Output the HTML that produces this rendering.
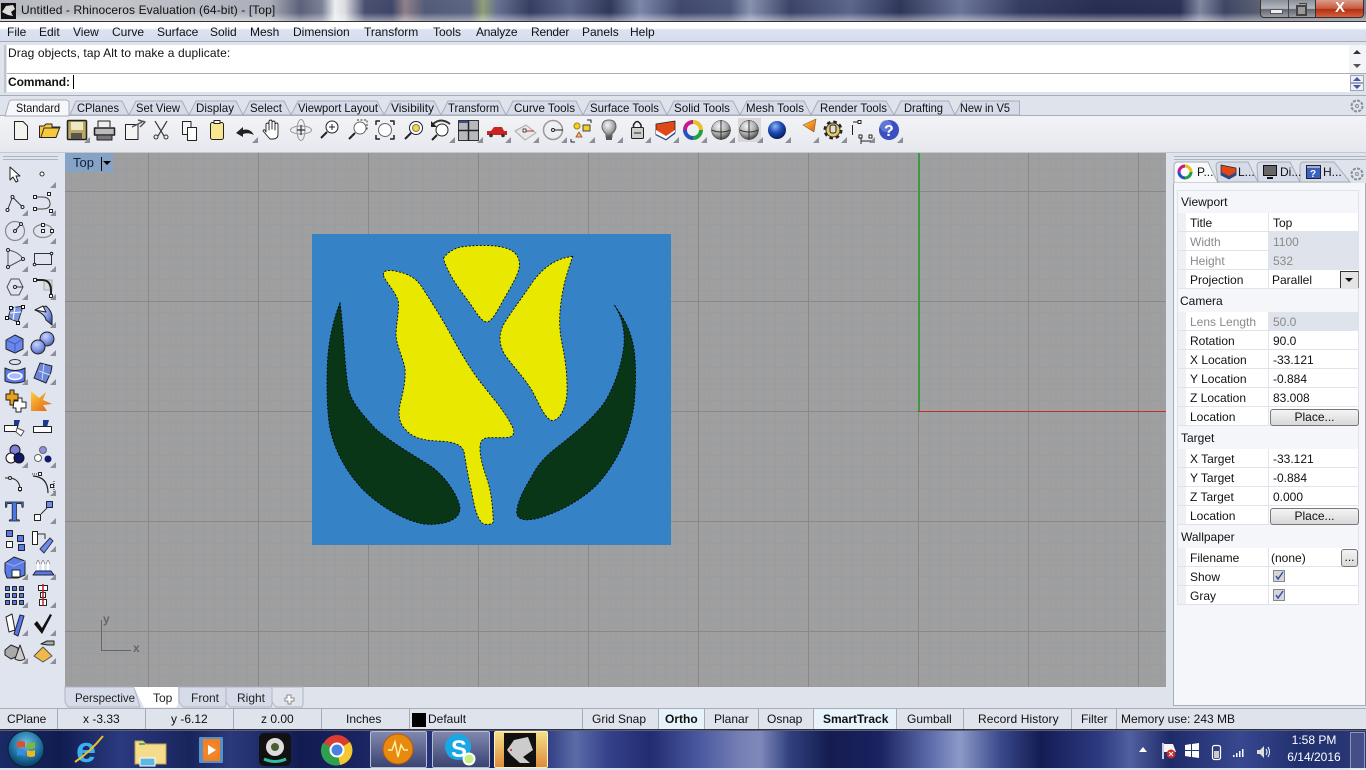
<!DOCTYPE html>
<html><head><meta charset="utf-8"><title>Untitled - Rhinoceros Evaluation (64-bit) - [Top]</title>
<style>
html,body{margin:0;padding:0;width:1366px;height:768px;overflow:hidden;background:#dfe3ec}
.a{position:absolute}
.t{position:absolute;white-space:nowrap;font:12px/14px "Liberation Sans",Arial,sans-serif;color:#111}
.g{color:#8a8a8a}
.b{font-weight:bold}
.c{text-align:center}
svg{position:absolute;left:0;top:0}
.sep{position:absolute;top:709px;height:20px;width:1px;background:#a9adb5}
.row{position:absolute;left:1178px;width:180px;height:18px;background:#fff;border-bottom:1px solid #dfe3ec}
.row:before{content:"";position:absolute;left:0;top:0;width:8px;height:18px;background:#eef0f5}
.row:after{content:"";position:absolute;left:90px;top:0;width:1px;height:18px;background:#dfe3ec}
.dis{position:absolute;left:1269px;width:89px;height:19px;background:#dfe3ec}
.btn{position:absolute;left:1270px;width:87px;height:15px;border:1px solid #777;border-radius:3px;background:linear-gradient(#f4f4f4,#d8d8d8);font:12px/15px "Liberation Sans",sans-serif;text-align:center;color:#111}
</style></head>
<body>
<!-- title bar -->
<div class="a" style="left:0;top:0;width:1366px;height:21px;background:linear-gradient(90deg,#b4b7bf 0,#c2c4c9 120px,#a9adb8 270px,#596079 300px,#7a8096 322px,#eceef0 335px,#d9dbe0 345px,#474e6e 365px,#3f4668 392px,#8f7f88 405px,#525a78 425px,#5b6480 470px,#8f9e78 483px,#667090 497px,#353c60 530px,#5a6488 570px,#2f3658 610px,#7b86a8 640px,#3f486c 680px,#4a5478 730px,#8791ae 750px,#3a4266 790px,#5a658c 850px,#2e3558 900px,#6a7598 960px,#343b60 1020px,#262c50 1100px,#2a3055 1180px,#7e869f 1200px,#3d4464 1225px,#5a5f72 1260px,#7a7e88 1366px)"></div>
<div class="a" style="left:0;top:0;width:1366px;height:21px;background:linear-gradient(rgba(255,255,255,.02),rgba(255,255,255,0) 60%,rgba(255,255,255,.45))"></div>
<div class="a" style="left:0;top:21px;width:1366px;height:1px;background:#333"></div>
<div class="a" style="left:1260px;top:0;width:55px;height:17px;background:linear-gradient(#8a8e98,#b6b9c0 50%,#62666f 55%,#9a9da4);border:1px solid #333;border-top:0;border-radius:0 0 0 4px"></div>
<div class="a" style="left:1315px;top:0;width:47px;height:17px;background:linear-gradient(#d99c8c,#c95a3c 50%,#b03015 55%,#d8603a);border:1px solid #333;border-top:0;border-radius:0 0 4px 0"></div>
<div class="a" style="left:1288px;top:0;width:1px;height:17px;background:#444"></div>
<div class="a" style="left:1270px;top:9px;width:11px;height:3px;background:#eee;border:1px solid #555"></div>
<div class="a" style="left:1296px;top:5px;width:7px;height:7px;border:2px solid #444;background:#999"></div>
<div class="a" style="left:1299px;top:3px;width:7px;height:7px;border:1px solid #444;border-left:0;border-bottom:0"></div>
<div class="t b" style="left:1335px;top:1px;font-size:15px;color:#fff">X</div>

<!-- menu -->
<div class="a" style="left:0;top:22px;width:1366px;height:19px;background:linear-gradient(#fff 0,#fff 6px,#dbe2f2 8px,#d6ddee 100%);border-bottom:1px solid #a8acb6"></div>
<div class="t" style="left:7px;top:25px">File</div>
<div class="t" style="left:39px;top:25px">Edit</div>
<div class="t" style="left:73px;top:25px">View</div>
<div class="t" style="left:112px;top:25px">Curve</div>
<div class="t" style="left:157px;top:25px">Surface</div>
<div class="t" style="left:210px;top:25px">Solid</div>
<div class="t" style="left:250px;top:25px">Mesh</div>
<div class="t" style="left:293px;top:25px">Dimension</div>
<div class="t" style="left:364px;top:25px">Transform</div>
<div class="t" style="left:433px;top:25px">Tools</div>
<div class="t" style="left:476px;top:25px;letter-spacing:-.2px">Analyze</div>
<div class="t" style="left:531px;top:25px;letter-spacing:-.2px">Render</div>
<div class="t" style="left:582px;top:25px">Panels</div>
<div class="t" style="left:630px;top:25px">Help</div>

<!-- command area -->
<div class="a" style="left:4px;top:45px;width:2px;height:48px;background:#c0c4cc"></div>
<div class="a" style="left:7px;top:45px;width:1342px;height:28px;background:#fff"></div>
<div class="a" style="left:1349px;top:45px;width:17px;height:28px;background:#f4f5f8"></div>
<div class="a" style="left:7px;top:73px;width:1359px;height:1px;background:#a8acb6"></div>
<div class="a" style="left:7px;top:74px;width:1343px;height:18px;background:#fff"></div>
<div class="t" style="left:8px;top:46px;letter-spacing:.1px">Drag objects, tap Alt to make a duplicate:</div>
<div class="t b" style="left:8px;top:75px;letter-spacing:-.1px">Command:</div>
<div class="a" style="left:73px;top:75px;width:1px;height:14px;background:#000"></div>
<div class="a" style="left:0;top:95px;width:1366px;height:1px;background:#a8acb6"></div>

<!-- toolbar bg -->
<div class="a" style="left:0;top:115px;width:1366px;height:1px;background:#a9adb8"></div>
<div class="a" style="left:0;top:116px;width:1366px;height:37px;background:linear-gradient(#f2f3f6,#e6e8ee)"></div>
<div class="a" style="left:0;top:152px;width:1366px;height:1px;background:#c4c7ce"></div>

<!-- left + right bg -->
<div class="a" style="left:0;top:153px;width:65px;height:555px;background:#dfe4ee"></div>
<div class="a" style="left:3px;top:156px;width:55px;height:2px;border-top:1px solid #b0b4bc;border-bottom:1px solid #b0b4bc"></div>
<div class="a" style="left:1174px;top:156px;width:192px;height:2px;border-top:1px solid #b0b4bc;border-bottom:1px solid #b0b4bc"></div>

<!-- viewport -->
<div class="a" style="left:65px;top:153px;width:1101px;height:534px;background-color:#9f9f9f;background-image:linear-gradient(90deg,#888 1px,transparent 1px),linear-gradient(#888 1px,transparent 1px),linear-gradient(90deg,#989da4 1px,transparent 1px),linear-gradient(#989da4 1px,transparent 1px);background-size:110px 100%,100% 110px,11px 100%,100% 11px;background-position:83px 0,0 38px,6px 0,0 5px"></div>
<div class="a" style="left:65px;top:153px;width:48px;height:19px;background:#86a3c6"></div>
<div class="t" style="left:73px;top:156px;font-size:13px;color:#102040">Top</div>
<div class="a" style="left:101px;top:157px;width:1px;height:14px;background:#000"></div>
<div class="a" style="left:103px;top:161px;width:0;height:0;border:4px solid transparent;border-top:4px solid #000"></div>
<div class="a" style="left:918px;top:153px;width:2px;height:258px;background:#3c9a40"></div>
<div class="a" style="left:919px;top:411px;width:247px;height:1px;background:#c03030"></div>
<div class="a" style="left:918px;top:411px;width:2px;height:1px;background:#c03030"></div>
<div class="a" style="left:101px;top:620px;width:1px;height:30px;background:#666"></div>
<div class="a" style="left:101px;top:650px;width:30px;height:1px;background:#666"></div>
<div class="t" style="left:103px;top:612px;font-weight:bold;color:#666">y</div>
<div class="t" style="left:133px;top:641px;font-weight:bold;color:#666">x</div>

<!-- bottom tabs -->
<div class="a" style="left:65px;top:687px;width:1101px;height:21px;background:#dfe3ec"></div>
<div class="a" style="left:0;top:708px;width:1366px;height:1px;background:#a9adb5"></div>

<svg width="1366" height="768" viewBox="0 0 1366 768">
<defs>
<radialGradient id="sg" cx=".4" cy=".3" r=".8"><stop offset="0" stop-color="#f4f4f4"/><stop offset=".55" stop-color="#a8a8a8"/><stop offset="1" stop-color="#2a2a2a"/></radialGradient>
<radialGradient id="sb" cx=".4" cy=".3" r=".8"><stop offset="0" stop-color="#8fb4f0"/><stop offset=".45" stop-color="#1c4cb8"/><stop offset="1" stop-color="#04103c"/></radialGradient>
<radialGradient id="sl" cx=".4" cy=".3" r=".8"><stop offset="0" stop-color="#c8d4ff"/><stop offset=".6" stop-color="#7a90e0"/><stop offset="1" stop-color="#3a4890"/></radialGradient>
<linearGradient id="yl" x1="0" y1="0" x2="0" y2="1"><stop offset="0" stop-color="#fff2a0"/><stop offset="1" stop-color="#e0a820"/></linearGradient>
<linearGradient id="or" x1="0" y1="0" x2="1" y2="1"><stop offset="0" stop-color="#ffd040"/><stop offset="1" stop-color="#e05a10"/></linearGradient>
<radialGradient id="orb" cx=".5" cy=".35" r=".7"><stop offset="0" stop-color="#6cc0e8"/><stop offset=".6" stop-color="#1c6e9e"/><stop offset="1" stop-color="#0a2c50"/></radialGradient>
<path id="f" d="M6 0V6H0Z" fill="#8c8f96"/>
</defs>

<!-- tabs top -->
<g font-family="Liberation Sans,sans-serif" font-size="12" fill="#111">
<g fill="#d6dbe9" stroke="#a8adba" stroke-width="1">
<path d="M1019.500 115V101H962L955 115Z"/>
<path d="M955 115L948.500 101H901L894 115Z"/>
<path d="M894 115L886 101H818L811 115Z"/>
<path d="M811 115L804 101H747L740 115Z"/>
<path d="M740 115L733 101H674L667 115Z"/>
<path d="M667 115L660 101H590L583 115Z"/>
<path d="M583 115L576 101H513L506 115Z"/>
<path d="M506 115L499 101H448L441 115Z"/>
<path d="M441 115L434 101H391L384 115Z"/>
<path d="M384 115L377 101H298L291 115Z"/>
<path d="M291 115L284 101H250L243 115Z"/>
<path d="M243 115L236 101H196L189 115Z"/>
<path d="M189 115L182 101H136L129 115Z"/>
<path d="M129 115L122 101H76L70 115Z"/>
</g>
<path d="M5 116L9 102Q10 100 12 100H65Q68 100 69 102V116Z" fill="#f6f7fa" stroke="#a8adba"/>
<g lengthAdjust="spacingAndGlyphs">
<text x="16" y="112" textLength="44" lengthAdjust="spacingAndGlyphs">Standard</text><text x="77" y="112" textLength="42" lengthAdjust="spacingAndGlyphs">CPlanes</text><text x="136" y="112" textLength="44" lengthAdjust="spacingAndGlyphs">Set View</text>
<text x="196" y="112" textLength="38" lengthAdjust="spacingAndGlyphs">Display</text><text x="250" y="112" textLength="32" lengthAdjust="spacingAndGlyphs">Select</text><text x="298" y="112" textLength="80" lengthAdjust="spacingAndGlyphs">Viewport Layout</text>
<text x="391" y="112" textLength="43" lengthAdjust="spacingAndGlyphs">Visibility</text><text x="448" y="112" textLength="51" lengthAdjust="spacingAndGlyphs">Transform</text><text x="514" y="112" textLength="61" lengthAdjust="spacingAndGlyphs">Curve Tools</text>
<text x="590" y="112" textLength="69" lengthAdjust="spacingAndGlyphs">Surface Tools</text><text x="674" y="112" textLength="56" lengthAdjust="spacingAndGlyphs">Solid Tools</text><text x="746" y="112" textLength="58" lengthAdjust="spacingAndGlyphs">Mesh Tools</text>
<text x="820" y="112" textLength="67" lengthAdjust="spacingAndGlyphs">Render Tools</text><text x="904" y="112" textLength="39" lengthAdjust="spacingAndGlyphs">Drafting</text><text x="960" y="112" textLength="50" lengthAdjust="spacingAndGlyphs">New in V5</text>
</g>
</g>
<!-- gear top right -->
<g fill="none" stroke="#8a8d94"><circle cx="1357" cy="106" r="5.500" stroke-dasharray="3 1.300" stroke-width="2"/><circle cx="1357" cy="106" r="1.500"/></g>

<!-- scroll arrows -->
<path d="M1353 54L1357 50L1361 54Z" fill="#333"/><path d="M1353 64L1361 64L1357 68Z" fill="#555"/>
<rect x="1350.500" y="75.500" width="13" height="7" fill="#eef0f8" stroke="#a0a4b0"/><rect x="1350.500" y="83.500" width="13" height="7" fill="#eef0f8" stroke="#a0a4b0"/>
<path d="M1353 81L1357 77L1361 81Z" fill="#4058b0"/><path d="M1353 85H1361L1357 89Z" fill="#4058b0"/>

<!-- top toolbar icons -->
<g stroke-linejoin="round">
<path d="M14.500 121.500H23L27.500 126V139.500H14.500Z" fill="#f4f4ee" stroke="#222"/>
<path d="M39.500 137.500V126H44L46 124H52V127H60L56 137.500Z" fill="#f5c93a" stroke="#222"/><path d="M41 137L44 128H60" fill="none" stroke="#333"/>
<rect x="67.500" y="120.500" width="19" height="19" rx="1" fill="#b8a860" stroke="#222" stroke-width="1.500"/><rect x="71" y="122" width="12" height="8" fill="#ece8c8"/><rect x="71" y="133" width="11" height="6" fill="#555"/>
<use href="#f" x="84" y="137"/>
<path d="M98 127V121H110V127" fill="#eee" stroke="#222"/><path d="M94.500 128H114.500V135H94.500Z" fill="#bbb" stroke="#222" stroke-width="1.500"/><path d="M97 135H112V140H97Z" fill="#777" stroke="#222"/>
<path d="M125.500 124.500H138V139.500H125.500Z" fill="#f4f4f4" stroke="#222"/><path d="M132 127L142 122M138 120L145 122L140 127" fill="none" stroke="#555" stroke-width="1.500"/>
<path d="M155 121L164 136M167 121L158 136" stroke="#333" stroke-width="1.200" fill="none"/><circle cx="156" cy="137" r="2" fill="none" stroke="#333"/><circle cx="166" cy="137" r="2" fill="none" stroke="#333"/>
<path d="M182.500 121.500H191V134.500H182.500Z" fill="#f6f6f6" stroke="#222"/><path d="M187.500 127.500H196.500V140.500H187.500Z" fill="#fff" stroke="#222"/>
<rect x="210.500" y="122.500" width="13" height="17" rx="2" fill="#f7e88f" stroke="#222"/><rect x="214" y="120.500" width="6" height="3" fill="#fff" stroke="#222"/>
<path d="M236 133L243 127L243 130Q250 128 254 135Q248 132 243 134V137Z" fill="#222"/><use href="#f" x="252" y="137"/>
<path d="M266 132V124Q268 122 269 124V130V121Q271 119 272 121V129V122Q274 120 275 122V130V124Q277 122 278 124V134Q278 139 273 139H270L263 131Q264 128 266 132Z" fill="#fff" stroke="#222" stroke-width=".9"/>
<g fill="none" stroke="#999"><ellipse cx="301" cy="130" rx="10.500" ry="4"/><ellipse cx="301" cy="130" rx="4" ry="10.500"/></g><path d="M301 125V135M297 130H305" stroke="#333" stroke-width="1.200"/>
<g fill="#fff" stroke="#222"><circle cx="332" cy="127" r="6"/><circle cx="360" cy="128" r="6" stroke="#666"/><circle cx="385" cy="130" r="6.500" stroke="#666"/><circle cx="416" cy="128" r="6.500"/><circle cx="442" cy="130" r="6"/></g>
<path d="M327 132L321 138M355 133L349 139M411 133L405 139M437 135L432 140" stroke="#222" stroke-width="2"/>
<path d="M332 124V130M329 127H335" stroke="#222"/>
<path d="M357 120H367V130" fill="none" stroke="#333" stroke-dasharray="2 1.500"/>
<path d="M376 125V121H380M390 121H394V125M376 135V139H380M390 139H394V135" fill="none" stroke="#222" stroke-width="1.500"/>
<circle cx="416" cy="128" r="3.500" fill="#f0dc30" stroke="#777"/>
<path d="M433 124Q441 117 450 124" fill="none" stroke="#333" stroke-width="2"/><path d="M431 121V127H437Z" fill="#222"/><use href="#f" x="449" y="137"/>
<rect x="458.500" y="120.500" width="20" height="20" fill="#b6b8bc" stroke="#333"/><path d="M468.500 120V141M458 130.500H479" stroke="#222" stroke-width="1.500"/><rect x="459" y="121" width="9" height="2" fill="#3a5090"/><use href="#f" x="477" y="137"/>
<path d="M487 131H491L494 127H502L504 131H507V135H487Z" fill="#cc2222"/><circle cx="491" cy="135.500" r="1.800" fill="#333"/><circle cx="503" cy="135.500" r="1.800" fill="#333"/><use href="#f" x="505" y="137"/>
<path d="M515 131L526 125L536 133L525 140Z" fill="#e8e8e8" stroke="#aaa"/><path d="M523 131L534 131" stroke="#c03030"/><rect x="523" y="129" width="3" height="3" fill="#fff" stroke="#111" stroke-width=".7"/><use href="#f" x="533" y="137"/>
<circle cx="553" cy="130" r="9.500" fill="none" stroke="#999" stroke-width="1.500"/><circle cx="553" cy="130" r="1.500" fill="#fff" stroke="#222"/><path d="M555 130H563" stroke="#222"/><use href="#f" x="561" y="137"/>
<circle cx="577" cy="126" r="3" fill="#f6d020" stroke="#a08010"/><rect x="583" y="125" width="7" height="6" fill="#f6d020" stroke="#444"/><path d="M576 137L579 132L582 137Z" fill="#f0c070" stroke="#a06030"/><path d="M587 120H591V123M571 139V142H575" fill="none" stroke="#222"/><use href="#f" x="589" y="137"/>
<path d="M609 120Q616 120 616 127Q616 130 612 134V137H606V134Q602 130 602 127Q602 120 609 120Z" fill="url(#sg)" stroke="#666"/><rect x="606" y="137" width="6" height="3" fill="#555"/><use href="#f" x="617" y="137"/>
<path d="M633.500 128V125Q637 118 641 125V128" fill="none" stroke="#222" stroke-width="1.500"/><rect x="631.500" y="127.500" width="12" height="11" rx="1" fill="#ccc" stroke="#222"/><path d="M634 133H641" stroke="#222"/><use href="#f" x="645" y="137"/>
<path d="M656 124L675 121V133L666 140L656 135Z" fill="#e04818" stroke="#222" stroke-width=".8"/><path d="M656 130L666 136L675 130V133L666 140L656 135Z" fill="#fff"/><path d="M656 134L666 139L675 132V134L666 140L656 135Z" fill="#2a4a90"/><use href="#f" x="673" y="137"/>
<g fill="none" stroke-width="4"><path d="M693 122A8 8 0 0 1 701 130" stroke="#e8c020"/><path d="M701 130A8 8 0 0 1 693 138" stroke="#20a040"/><path d="M693 138A8 8 0 0 1 685 130" stroke="#2850c0"/><path d="M685 130A8 8 0 0 1 693 122" stroke="#c81888"/></g><use href="#f" x="701" y="137"/>
<circle cx="721" cy="130" r="9.500" fill="url(#sg)" stroke="#333" stroke-width=".5"/><path d="M721 120V140M711.500 130Q721 134 730.500 130" stroke="#333" fill="none"/><use href="#f" x="729" y="137"/>
<rect x="738" y="118" width="23" height="24" fill="#d8d8dc"/><circle cx="749" cy="130" r="9.500" fill="url(#sg)" stroke="#333" stroke-width=".5"/><path d="M749 120V140M739.500 130Q749 134 758.500 130" stroke="#333" fill="none"/><use href="#f" x="757" y="137"/>
<circle cx="777" cy="130" r="9" fill="url(#sb)"/><use href="#f" x="785" y="137"/>
<path d="M803 125L816 119L814 132Z" fill="url(#or)" stroke="#806030" stroke-width=".6"/><use href="#f" x="813" y="137"/>
<circle cx="833" cy="130" r="7" fill="#e8c860" stroke="#222" stroke-width="5" stroke-dasharray="3 2.500"/><circle cx="833" cy="130" r="7" fill="#e8c860" stroke="#333"/><rect x="830" y="125" width="6" height="8" rx="2" fill="#ddd" stroke="#222"/><use href="#f" x="841" y="137"/>
<path d="M853 122H859M852.500 125V135M861 137V144M861 141H872" stroke="#222" fill="none"/><rect x="858" y="120.500" width="3" height="3" fill="#fff" stroke="#222"/><rect x="859" y="135" width="3" height="3" fill="#fff" stroke="#222"/><rect x="869" y="135" width="3" height="3" fill="#fff" stroke="#222"/><use href="#f" x="869" y="137"/>
<circle cx="889" cy="130" r="10" fill="#3a50c0"/><circle cx="886" cy="126" r="6" fill="#7a90e0" opacity=".6"/><text x="884" y="136" font-family="Liberation Sans,sans-serif" font-weight="bold" font-size="16" fill="#fff">?</text><use href="#f" x="897" y="137"/>
</g>

<!-- left toolbar col 1 / col 2 -->
<g stroke-linejoin="round">
<path d="M10 167V180L13 177L16 182L18 181L16 176H20Z" fill="#fff" stroke="#222"/>
<circle cx="42" cy="174" r="2" fill="#fff" stroke="#333"/><use href="#f" x="50" y="182"/>
<path d="M7.500 210L12.500 197L22.500 207" fill="none" stroke="#333"/><g fill="#fff" stroke="#222"><circle cx="7.500" cy="210" r="1.500"/><circle cx="12.500" cy="197" r="1.500"/><circle cx="22.500" cy="207" r="1.500"/></g><use href="#f" x="22" y="210"/>
<path d="M35 197H42Q50 197 50 204Q50 209 42 209H35" fill="none" stroke="#444"/><g fill="#fff" stroke="#222"><rect x="33.500" y="195.500" width="3" height="3"/><rect x="47.500" y="192.500" width="3" height="3"/><rect x="33.500" y="207.500" width="3" height="3"/><rect x="49.500" y="209.500" width="3" height="3"/></g><use href="#f" x="50" y="210"/>
<circle cx="15" cy="231" r="9.500" fill="none" stroke="#888" stroke-width="1.200"/><path d="M15 231L21 224" stroke="#333"/><circle cx="15" cy="231" r="1.500" fill="#fff" stroke="#222"/><circle cx="21" cy="224" r="1.500" fill="#fff" stroke="#222"/><use href="#f" x="22" y="238"/>
<ellipse cx="43" cy="231" rx="9.500" ry="6.500" fill="none" stroke="#888" stroke-width="1.200"/><g fill="#fff" stroke="#222"><rect x="41.500" y="223.500" width="3" height="3"/><rect x="41.500" y="229.500" width="3" height="3"/><rect x="50.500" y="229.500" width="3" height="3"/></g><use href="#f" x="50" y="238"/>
<path d="M8 250V267L23 259Q19 252 8 250Z" fill="none" stroke="#555"/><g fill="#fff" stroke="#222"><circle cx="8" cy="250" r="1.500"/><circle cx="8" cy="267" r="1.500"/><circle cx="23" cy="259" r="1.500"/></g><use href="#f" x="22" y="266"/>
<rect x="34.500" y="253.500" width="17" height="11" fill="none" stroke="#333"/><g fill="#fff" stroke="#222"><circle cx="34.500" cy="264.500" r="1.300"/><circle cx="51.500" cy="253.500" r="1.300"/></g><use href="#f" x="50" y="266"/>
<path d="M7 287L11 279H19L23 287L19 295H11Z" fill="none" stroke="#555"/><path d="M15 287H23" stroke="#333"/><circle cx="15" cy="287" r="1.500" fill="#fff" stroke="#222"/><use href="#f" x="22" y="294"/>
<rect x="44" y="280" width="8" height="10" fill="#ddd" stroke="#aaa"/><path d="M35 280H42Q51 280 51 291V295" fill="none" stroke="#222" stroke-width="2"/><g fill="#fff" stroke="#222"><rect x="33.500" y="278.500" width="3" height="3"/><rect x="49.500" y="294.500" width="3" height="3"/></g><use href="#f" x="50" y="294"/>
<path d="M8 318L11 308L23 306L18 322Z" fill="#7e98e8" stroke="#333"/><path d="M15 307L13 320M10 313L21 312" stroke="#fff"/><g fill="#fff" stroke="#111"><rect x="5.500" y="316.500" width="3" height="3"/><rect x="9.500" y="306.500" width="3" height="3"/><rect x="21.500" y="305.500" width="3" height="3"/><rect x="16.500" y="321.500" width="3" height="3"/></g><use href="#f" x="22" y="322"/>
<path d="M35 310L46 306Q53 312 52 320L52 325L46 320Q45 314 35 310Z" fill="url(#sl)" stroke="#222"/><path d="M35 310L43 306L46 312Z" fill="#fff" stroke="#222"/><use href="#f" x="50" y="322"/>
<path d="M6 340L15 335L23 339V349L15 353L6 349Z" fill="#6a86ea" stroke="#222"/><path d="M6 340L15 344L23 339M15 344V353" stroke="#405ac0" fill="none"/><use href="#f" x="22" y="350"/>
<circle cx="47" cy="339" r="7" fill="url(#sl)" stroke="#222"/><circle cx="38" cy="347" r="7" fill="url(#sl)" stroke="#222"/><use href="#f" x="50" y="350"/>
<ellipse cx="15" cy="362" rx="5.500" ry="2.500" fill="none" stroke="#333"/><path d="M5 368Q15 373 25 368V381Q15 385 5 381Z" fill="#5a7ae8" stroke="#222"/><ellipse cx="15" cy="376" rx="7" ry="3.500" fill="#a8bcff" stroke="#fff" stroke-width="1.500"/><use href="#f" x="22" y="379"/>
<path d="M34 378L40 363L52 366L51 372L46 383Z" fill="#6c86d8" stroke="#223"/><path d="M39 371L50 375M44 364L42 380" stroke="#cfd8ff"/><use href="#f" x="50" y="379"/>
<path d="M6 394H10V390H14V394H18V400H14V405H10V400H6Z" fill="#e8a020" stroke="#222"/><path d="M14 401H18V398H22V402H26V408H21V412H16V408H13Z" fill="#fff" stroke="#222"/>
<path d="M31 391L39 398L46 392L43 400L52 404L43 405L47 411H31Z" fill="url(#or)"/>
<path d="M14 420L20 420L18 427L14 427Z" fill="#1c3a90"/><rect x="4.500" y="425.500" width="13" height="6" fill="#fff" stroke="#222"/><path d="M17 428L24 431L21 436L16 432Z" fill="#fff" stroke="#555"/>
<path d="M43 420L49 420L47 427H43Z" fill="#1c3a90"/><rect x="33.500" y="426.500" width="18" height="6" fill="#fff" stroke="#222"/>
<circle cx="15" cy="450" r="5" fill="#8080d8" stroke="#111"/><circle cx="11" cy="458" r="5" fill="#fff" stroke="#111"/><circle cx="19" cy="458" r="5" fill="#10186a" stroke="#111"/><use href="#f" x="22" y="462"/>
<circle cx="43" cy="450" r="3.500" fill="#9090e0" stroke="#666"/><circle cx="38" cy="458" r="3.500" fill="#fff" stroke="#666"/><circle cx="48" cy="459" r="3.500" fill="#10186a"/><use href="#f" x="50" y="462"/>
<path d="M5 478H10Q19 479 20 488V492" fill="none" stroke="#222"/><circle cx="10" cy="478" r="1.500" fill="#fff" stroke="#222"/><rect x="18.500" y="487.500" width="3" height="3" fill="#fff" stroke="#222"/>
<path d="M33 476Q48 477 48 493" fill="none" stroke="#222" stroke-width="1.200"/><path d="M32 474H38M54 481V494" stroke="#222" stroke-dasharray="1 1"/><rect x="38.500" y="472.500" width="3" height="3" fill="#fff" stroke="#222"/><rect x="50.500" y="484.500" width="3" height="3" fill="#fff" stroke="#222"/><use href="#f" x="50" y="490"/>
<text x="5" y="521" font-family="Liberation Serif,serif" font-weight="bold" font-size="28" fill="#4a78e0" stroke="#111" stroke-width=".7">T</text>
<rect x="34.500" y="514.500" width="6" height="6" fill="#fff" stroke="#222"/><rect x="46.500" y="501.500" width="6" height="6" fill="#6c8cf0" stroke="#222"/><path d="M41 514L47 508" stroke="#333"/><use href="#f" x="50" y="518"/>
<g stroke="#222"><rect x="6.500" y="530.500" width="6" height="6" fill="#5878e8"/><rect x="17.500" y="535.500" width="6" height="6" fill="#5878e8"/><rect x="6.500" y="541.500" width="6" height="6" fill="#fff"/><rect x="18.500" y="544.500" width="6" height="6" fill="#5878e8"/></g>
<rect x="32.500" y="531.500" width="5" height="13" fill="#fff" stroke="#222"/><path d="M40 549L50 538L53 541L44 553Z" fill="#6c8cf0" stroke="#334"/><path d="M38 534H45V539" fill="none" stroke="#333"/><use href="#f" x="50" y="546"/>
<path d="M5 563L14 557L25 561V575L18 578H7L5 572Z" fill="#5a7ce8" stroke="#222"/><rect x="12" y="570" width="8" height="7" fill="#fff" stroke="#222"/><path d="M6 563L14 566L25 561" stroke="#aac" fill="none"/><use href="#f" x="22" y="574"/>
<path d="M38 561V572M43 561V572M48 561V572" stroke="#fff" stroke-width="2"/><path d="M36 564L38 560L40 564M41 564L43 560L45 564M46 564L48 560L50 564" fill="#fff" stroke="#444" stroke-width=".5"/><path d="M33 575H54L51 571H36Z" fill="#5878e8" stroke="#223"/><use href="#f" x="50" y="574"/>
<g fill="#5878e8" stroke="#222"><rect x="5.500" y="586.500" width="4" height="4"/><rect x="12.500" y="586.500" width="4" height="4"/><rect x="19.500" y="586.500" width="4" height="4"/><rect x="5.500" y="593.500" width="4" height="4"/><rect x="12.500" y="593.500" width="4" height="4"/><rect x="19.500" y="593.500" width="4" height="4"/><rect x="5.500" y="600.500" width="4" height="4"/><rect x="12.500" y="600.500" width="4" height="4"/><rect x="19.500" y="600.500" width="4" height="4"/></g><use href="#f" x="22" y="602"/>
<g fill="#fff" stroke="#222"><rect x="38.500" y="585.500" width="9" height="5"/><rect x="40.500" y="592.500" width="5" height="5"/><rect x="39.500" y="599.500" width="7" height="6"/></g><path d="M43 584V606" stroke="#c02020" stroke-width="1.500"/><use href="#f" x="50" y="602"/>
<path d="M6 617L12 614L15 630L9 632Z" fill="#fff" stroke="#222"/><path d="M14 634L20 615L24 616L18 636Z" fill="#5878e8" stroke="#223"/><use href="#f" x="22" y="630"/>
<path d="M34 624L37 621L42 628L50 614L52 615L42 634Z" fill="#111"/><use href="#f" x="50" y="630"/>
<path d="M5 650L11 645L18 648V656L11 659L5 655Z" fill="#aaa" stroke="#222"/><path d="M15 659L20 645L25 659Q20 662 15 659Z" fill="#ccc" stroke="#222"/><use href="#f" x="22" y="658"/>
<path d="M34 656L43 647L52 656L43 662Z" fill="#f0b848" stroke="#555"/><path d="M41 644L47 641H54V645H48Z" fill="#aaa" stroke="#222"/><use href="#f" x="50" y="658"/>
</g>

<!-- bottom viewport tabs -->
<g font-family="Liberation Sans,sans-serif" font-size="12" fill="#222">
<path d="M65 687V702L68 707H140L134 687Z" fill="#d6dbe9" stroke="#b0b4be"/>
<path d="M179 687V706L177 707H146L140 687Z" fill="#d6dbe9" stroke="none"/>
<path d="M134 687H178V705L176 707.500H144Z" fill="#fff"/>
<path d="M179 687V702L183 707H225L226 704V687Z" fill="#d6dbe9" stroke="#b0b4be"/>
<path d="M226 687V702L230 707H271L272 704V687Z" fill="#d6dbe9" stroke="#b0b4be"/>
<path d="M272 687V702L276 707H302L303 704V687Z" fill="none" stroke="#b0b4be"/>
<text x="75" y="702" textLength="60" lengthAdjust="spacingAndGlyphs">Perspective</text><text x="153" y="702">Top</text><text x="191" y="702" textLength="28" lengthAdjust="spacingAndGlyphs">Front</text><text x="237" y="702" textLength="28" lengthAdjust="spacingAndGlyphs">Right</text>
<path d="M287 695H291V698H294V701H291V704H288V701H285V698H287Z" fill="#fff" stroke="#888"/>
</g>

<!-- tulip -->
<g transform="translate(300 225) scale(.33333)">
<rect x="36" y="27" width="1077" height="933" fill="#3582c6"/>
<g stroke="#000" stroke-width="2.500" stroke-dasharray="6 5">
<path fill="#e9e800" d="M430 100C445 80 465 68 490 65C530 60 590 58 625 72C650 82 660 100 658 125C655 150 630 190 610 225C590 262 575 290 560 291C545 290 530 265 510 235C480 195 445 150 430 100Z"/>
<path fill="#e9e800" d="M818 94C770 100 730 125 695 175C665 220 630 265 610 300C595 330 597 360 615 390C640 425 670 455 695 495C715 530 735 585 758 587C780 585 800 545 801 500C802 440 795 400 785 350C775 300 778 250 790 190C797 155 808 125 818 94Z"/>
<path fill="#e9e800" d="M250 150C250 135 265 135 285 138C320 145 345 155 365 185C390 225 420 270 450 325C480 380 510 430 540 470C575 515 620 565 640 612C645 630 635 638 615 638L565 638C545 640 540 650 540 670C540 700 550 730 562 765C575 805 578 850 580 890C578 900 555 900 548 895C530 880 522 840 515 800C505 760 497 710 492 680C485 660 465 652 430 649C390 647 350 645 325 622C300 600 295 580 298 550C305 510 318 480 315 430C308 395 288 360 288 325C290 290 297 260 295 230C285 195 255 170 250 150Z"/>
<path fill="#0a3618" d="M120 234C105 270 85 340 82 420C80 480 80 540 88 600C100 670 135 735 185 790C240 845 310 885 370 897C420 902 480 890 480 850C475 810 435 755 395 725C340 690 270 650 225 610C190 570 155 535 145 490C135 440 130 300 120 234Z"/>
<path fill="#0a3618" d="M943 240C965 275 975 310 972 360C965 420 945 480 915 530C880 580 830 620 780 660C740 690 715 715 695 755C670 795 650 835 650 865C655 890 690 888 730 875C790 855 850 820 890 780C950 715 990 630 1002 540C1008 480 1008 420 1003 380C995 320 975 285 943 240Z"/>
</g>
</g>

<!-- right panel tabs -->
<g font-family="Liberation Sans,sans-serif" font-size="12" fill="#111">
<path d="M1174 183V166Q1174 162 1178 162H1208L1218 183Z" fill="#f8f9fb" stroke="#a9adb5"/>
<path d="M1218 182L1216 166Q1216 162 1220 162H1248L1258 182Z" fill="#d6dbe9" stroke="#a9adb5"/>
<path d="M1258 182L1257 166Q1257 162 1261 162H1290L1300 182Z" fill="#d6dbe9" stroke="#a9adb5"/>
<path d="M1300 182V166Q1300 162 1304 162H1334L1350 182Z" fill="#d6dbe9" stroke="#a9adb5"/>
<g fill="none" stroke-width="3"><path d="M1185 166A6 6 0 0 1 1191 172" stroke="#e8c020"/><path d="M1191 172A6 6 0 0 1 1185 178" stroke="#20a040"/><path d="M1185 178A6 6 0 0 1 1179 172" stroke="#2850c0"/><path d="M1179 172A6 6 0 0 1 1185 166" stroke="#c81888"/></g>
<text x="1197" y="176">P...</text>
<path d="M1221 165L1236 168V175L1229 179L1221 175Z" fill="#e04818" stroke="#222" stroke-width=".7"/><path d="M1221 172L1229 176L1236 172V175L1229 179L1221 175Z" fill="#2a4a90"/>
<text x="1238" y="176">L...</text>
<rect x="1263.500" y="165.500" width="13" height="10" fill="#666" stroke="#111"/><path d="M1267 178H1273" stroke="#111" stroke-width="2"/>
<text x="1280" y="176">Di...</text>
<rect x="1306.500" y="165.500" width="14" height="13" fill="#3a60c0" stroke="#223"/><rect x="1307" y="166" width="13" height="2" fill="#aac"/><text x="1310" y="177" font-size="10" font-weight="bold" fill="#fff">?</text>
<text x="1323" y="176">H...</text>
<g fill="none" stroke="#8a8d94"><circle cx="1357" cy="174" r="5.500" stroke-dasharray="3 1.300" stroke-width="2"/><circle cx="1357" cy="174" r="1.500"/></g>
</g>
</svg>

<!-- right panel -->
<div class="a" style="left:1173px;top:183px;width:191px;height:522px;background:#f5f6fa;border:1px solid #a9adb5;border-top:0"></div>
<div class="a" style="left:1178px;top:191px;width:180px;height:413px;background:#f5f6fa;outline:1px solid #dfe3ec"></div>

<div class="row" style="top:213px"></div><div class="row" style="top:232px"></div><div class="row" style="top:251px"></div><div class="row" style="top:270px"></div>
<div class="row" style="top:312px"></div><div class="row" style="top:331px"></div><div class="row" style="top:350px"></div><div class="row" style="top:369px"></div><div class="row" style="top:388px"></div><div class="row" style="top:407px"></div>
<div class="row" style="top:449px"></div><div class="row" style="top:468px"></div><div class="row" style="top:487px"></div><div class="row" style="top:506px"></div>
<div class="row" style="top:548px"></div><div class="row" style="top:567px"></div><div class="row" style="top:586px"></div>
<div class="dis" style="top:232px;height:38px"></div><div class="dis" style="top:312px"></div>

<div class="t" style="left:1181px;top:195px">Viewport</div>
<div class="t" style="left:1190px;top:216px">Title</div><div class="t" style="left:1273px;top:216px">Top</div>
<div class="t g" style="left:1190px;top:235px">Width</div><div class="t g" style="left:1273px;top:235px">1100</div>
<div class="t g" style="left:1190px;top:254px">Height</div><div class="t g" style="left:1273px;top:254px">532</div>
<div class="t" style="left:1190px;top:273px">Projection</div><div class="t" style="left:1272px;top:273px">Parallel</div>
<div class="a" style="left:1340px;top:271px;width:17px;height:16px;background:#e4e4e4;border-left:1px solid #333;border-top:1px solid #333;border-right:1px solid #888"></div>
<div class="a" style="left:1345px;top:278px;width:0;height:0;border:4px solid transparent;border-top:4px solid #111"></div>
<div class="t" style="left:1180px;top:294px">Camera</div>
<div class="t g" style="left:1190px;top:315px">Lens Length</div><div class="t g" style="left:1273px;top:315px">50.0</div>
<div class="t" style="left:1190px;top:334px">Rotation</div><div class="t" style="left:1273px;top:334px">90.0</div>
<div class="t" style="left:1190px;top:353px">X Location</div><div class="t" style="left:1273px;top:353px">-33.121</div>
<div class="t" style="left:1190px;top:372px">Y Location</div><div class="t" style="left:1273px;top:372px">-0.884</div>
<div class="t" style="left:1190px;top:391px">Z Location</div><div class="t" style="left:1273px;top:391px">83.008</div>
<div class="t" style="left:1190px;top:410px">Location</div><div class="btn" style="top:409px">Place...</div>
<div class="t" style="left:1181px;top:431px">Target</div>
<div class="t" style="left:1190px;top:452px">X Target</div><div class="t" style="left:1273px;top:452px">-33.121</div>
<div class="t" style="left:1190px;top:471px">Y Target</div><div class="t" style="left:1273px;top:471px">-0.884</div>
<div class="t" style="left:1190px;top:490px">Z Target</div><div class="t" style="left:1273px;top:490px">0.000</div>
<div class="t" style="left:1190px;top:509px">Location</div><div class="btn" style="top:508px">Place...</div>
<div class="t" style="left:1181px;top:530px">Wallpaper</div>
<div class="t" style="left:1190px;top:551px">Filename</div><div class="t" style="left:1271px;top:551px">(none)</div>
<div class="btn" style="left:1341px;top:549px;width:15px;height:16px;line-height:14px">...</div>
<div class="t" style="left:1190px;top:570px">Show</div><div class="t" style="left:1190px;top:589px">Gray</div>
<svg width="1366" height="768" viewBox="0 0 1366 768" style="pointer-events:none">
<rect x="1273.500" y="570.500" width="11" height="11" fill="#d4d6dc" stroke="#888"/><path d="M1276 576L1278 579L1283 572" fill="none" stroke="#3a4ea0" stroke-width="1.500"/>
<rect x="1273.500" y="589.500" width="11" height="11" fill="#d4d6dc" stroke="#888"/><path d="M1276 595L1278 598L1283 591" fill="none" stroke="#3a4ea0" stroke-width="1.500"/>
</svg>

<!-- status bar -->
<div class="a" style="left:0;top:709px;width:1366px;height:20px;background:#dfe3ec"></div>
<div class="a" style="left:658px;top:709px;width:46px;height:20px;background:#e6f3fb"></div>
<div class="a" style="left:813px;top:709px;width:83px;height:20px;background:#e6f3fb"></div>
<div class="sep" style="left:57px"></div><div class="sep" style="left:145px"></div><div class="sep" style="left:233px"></div><div class="sep" style="left:321px"></div><div class="sep" style="left:409px"></div><div class="sep" style="left:582px"></div><div class="sep" style="left:658px"></div><div class="sep" style="left:704px"></div><div class="sep" style="left:758px"></div><div class="sep" style="left:813px"></div><div class="sep" style="left:896px"></div><div class="sep" style="left:963px"></div><div class="sep" style="left:1071px"></div><div class="sep" style="left:1116px"></div>
<div class="t" style="left:7px;top:712px">CPlane</div>
<div class="t" style="left:83px;top:712px">x -3.33</div>
<div class="t" style="left:171px;top:712px">y -6.12</div>
<div class="t" style="left:261px;top:712px">z 0.00</div>
<div class="t" style="left:346px;top:712px">Inches</div>
<div class="a" style="left:412px;top:713px;width:14px;height:14px;background:#000"></div>
<div class="t" style="left:428px;top:712px">Default</div>
<div class="t" style="left:592px;top:712px">Grid Snap</div>
<div class="t b" style="left:665px;top:712px">Ortho</div>
<div class="t" style="left:714px;top:712px">Planar</div>
<div class="t" style="left:767px;top:712px">Osnap</div>
<div class="t b" style="left:823px;top:712px">SmartTrack</div>
<div class="t" style="left:907px;top:712px">Gumball</div>
<div class="t" style="left:978px;top:712px;letter-spacing:.1px">Record History</div>
<div class="t" style="left:1081px;top:712px">Filter</div>
<div class="t" style="left:1121px;top:712px">Memory use: 243 MB</div>

<!-- taskbar -->
<div class="a" style="left:0;top:729px;width:1366px;height:39px;background:linear-gradient(90deg,#1a2a66 0,#101c50 60px,#2a3a80 120px,#18245c 190px,#2a3a7c 230px,#121c52 300px,#1a2460 360px,#28347c 420px,#141e54 500px,#2e3a80 545px,#5a6ca8 575px,#33408a 610px,#222c70 650px,#4a5aa0 700px,#767fb4 740px,#8088bb 760px,#30407e 790px,#141c50 830px,#1a2260 880px,#5c6caa 930px,#8c9ac8 960px,#3a4a8c 1000px,#141c54 1040px,#2c3a80 1100px,#5060a0 1130px,#1e2a68 1170px,#384890 1240px,#20306e 1300px,#2c3878 1366px)"></div>
<div class="a" style="left:0;top:729px;width:1366px;height:2px;background:linear-gradient(#1b1d26,#6d7396)"></div>
<div class="a" style="left:1350px;top:732px;width:13px;height:36px;background:rgba(255,255,255,.12);border:1px solid rgba(255,255,255,.4)"></div>
<div class="a" style="left:370px;top:731px;width:57px;height:37px;background:linear-gradient(#8088ae,#3a4472);border:1px solid #b8bcd0;border-radius:2px;box-sizing:border-box"></div>
<div class="a" style="left:432px;top:731px;width:58px;height:37px;background:linear-gradient(#8088ae,#3a4472);border:1px solid #b8bcd0;border-radius:2px;box-sizing:border-box"></div>
<div class="a" style="left:494px;top:731px;width:54px;height:37px;background:linear-gradient(#f4e08a,#e08a3c);border:1px solid #fff2c0;border-radius:2px;box-sizing:border-box"></div>
<svg width="1366" height="768" viewBox="0 0 1366 768">
<circle cx="26" cy="749" r="18" fill="url(#orb)" stroke="#0a2030"/>
<g><path d="M17 742Q21 740 25 742V748Q21 746 17 748Z" fill="#e05030"/><path d="M27 742Q31 744 35 742V748Q31 750 27 748Z" fill="#80b830"/><path d="M17 750Q21 748 25 750V756Q21 754 17 756Z" fill="#3090e0"/><path d="M27 750Q31 752 35 750V756Q31 758 27 756Z" fill="#f0b820"/></g>
<text x="76" y="762" font-family="Liberation Sans,sans-serif" font-size="36" font-weight="bold" fill="#3ab0f0">e</text>
<path d="M75 762Q90 752 103 736" fill="none" stroke="#f0c020" stroke-width="2"/>
<path d="M135 746V741H143L146 744H166V764H135Z" fill="#f4dc8c" stroke="#c0a050"/><rect x="139" y="743" width="6" height="2" fill="#50b060"/><path d="M140 758H155V766H140Z" fill="#60b8e0" stroke="#fff"/>
<rect x="199" y="737" width="24" height="26" rx="1" fill="#5890c8"/><path d="M203 739H220V761H203Z" fill="#f08020"/><circle cx="211" cy="750" r="8" fill="#f4862a"/><path d="M208 745L216 750L208 755Z" fill="#fff"/>
<rect x="259" y="733" width="32" height="33" rx="5" fill="#111"/><circle cx="275" cy="747" r="9" fill="#ddd"/><circle cx="275" cy="747" r="4" fill="#486030"/><path d="M264 759Q275 764 286 759" stroke="#30c0a0" stroke-width="3" fill="none"/>
<circle cx="337" cy="750" r="15" fill="#dc3d30"/><path d="M337 750L350 742A15 15 0 0 1 340 765Z" fill="#f4c830"/><path d="M337 750L340 765A15 15 0 0 1 323 743Z" fill="#30a050"/><circle cx="337" cy="750" r="6.500" fill="#4a80e0" stroke="#fff" stroke-width="2"/>
<circle cx="398" cy="749" r="15" fill="#e88a10" stroke="#c05808"/><path d="M388 750H392L395 742L398 757L401 745L404 750H408" fill="none" stroke="#fff2a0" stroke-width="1.500"/>
<circle cx="458" cy="747" r="13" fill="#18a8e8"/><text x="451" y="757" font-family="Liberation Sans,sans-serif" font-weight="bold" font-size="24" fill="#fff">S</text><circle cx="469" cy="759" r="5.500" fill="#c8f080" stroke="#fff" stroke-width="2"/>
<rect x="504" y="733" width="32" height="34" fill="#111"/><path d="M507 750L514 740L528 737L533 750L523 757L530 763L520 763L511 755Z" fill="#ccc"/><circle cx="511" cy="750" r="1" fill="#d02020"/>
<path d="M1139 752L1143 747L1147 752Z" fill="#fff"/>
<path d="M1163 743V759" stroke="#fff" stroke-width="1.500"/><path d="M1164 744H1173L1176 752H1164Z" fill="#f4f4f4"/><circle cx="1171" cy="754" r="4.500" fill="#c82828"/><path d="M1169 752L1173 756M1173 752L1169 756" stroke="#fff"/>
<path d="M1185 745L1191 744V750H1185ZM1192 744L1199 743V750H1192ZM1185 751H1191V757L1185 756ZM1192 751H1199V758L1192 757Z" fill="#fff"/>
<rect x="1212.500" y="745.500" width="8" height="14" rx="2" fill="none" stroke="#fff" stroke-width="1.200"/><rect x="1214" y="751" width="5" height="7" fill="#ccc"/>
<path d="M1233 752h1.500v2H1233zM1236 750h1.500v4H1236zM1239 748h1.500v6H1239zM1242 746h1.500v8H1242z" fill="#fff" transform="translate(0 3)"/>
<path d="M1257 750H1260L1264 746V758L1260 754H1257Z" fill="#ddd"/><path d="M1266 749Q1268 752 1266 755M1268 747Q1271 752 1268 757" fill="none" stroke="#fff"/>
</svg>
<div class="t" style="left:1289px;top:733px;width:50px;color:#fff;text-align:center">1:58 PM</div>
<div class="t" style="left:1282px;top:750px;width:64px;color:#fff;text-align:center">6/14/2016</div>
<div class="t" style="left:21px;top:3px;font-size:12px;letter-spacing:.1px">Untitled - Rhinoceros Evaluation (64-bit) - [Top]</div>
<svg width="20" height="20" viewBox="0 0 20 20" style="left:0;top:0"><rect x="1" y="3" width="15" height="16" fill="#111"/><path d="M2 12L6 6L13 5L15 9L11 12L13 16L8 15Z" fill="#ddd"/></svg>
</body></html>
